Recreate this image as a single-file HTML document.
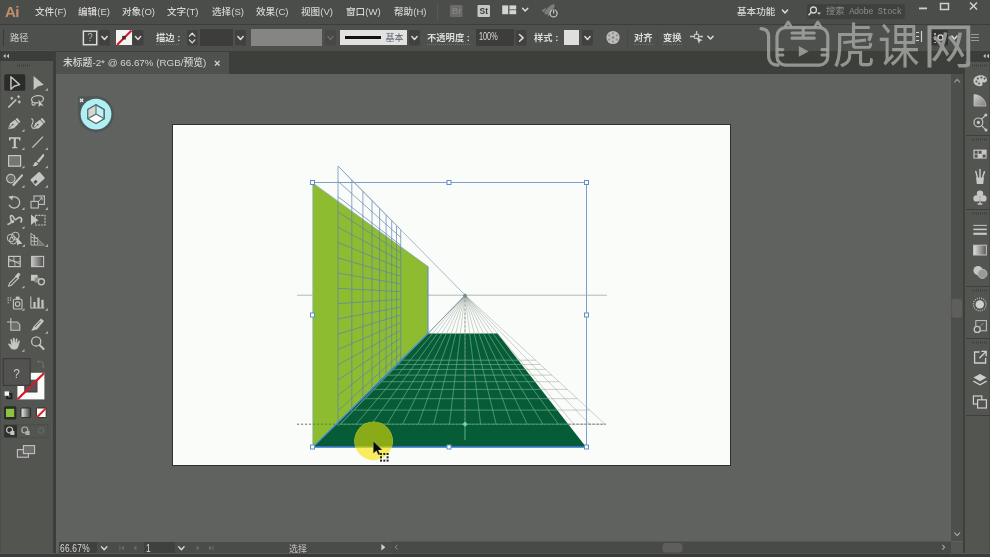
<!DOCTYPE html>
<html lang="zh-CN"><head><meta charset="utf-8"><title>Adobe Illustrator</title>
<style>
*{box-sizing:border-box;margin:0;padding:0}
html,body{width:990px;height:557px;overflow:hidden;background:#5f615e;}
body{position:relative;font-family:"Liberation Sans", "Noto Sans CJK SC", sans-serif;font-size:10px;color:#d6d6d4;line-height:1;-webkit-font-smoothing:antialiased}
.abs{position:absolute}
.t{position:absolute;white-space:nowrap;line-height:12px;height:12px;filter:blur(0.3px)}
#menubar{left:0;top:0;width:990px;height:24px;background:#4b4d4a}
#ctrlbar{left:0;top:25px;width:990px;height:25.5px;background:#4e504d}
#sep1{left:0;top:23.5px;width:990px;height:1.5px;background:#3c3e3b}
#tabstrip{left:53px;top:50.5px;width:913px;height:23px;background:#3d3f3b}
#tab{left:56px;top:51.5px;width:172.5px;height:22px;background:#4f514e}
#canvas{left:56px;top:73.5px;width:895px;height:480px;background:#5f625e}
#toolbar{left:0;top:50px;width:53px;height:507px;background:#535551;border-left:1.5px solid #4a4c49}
#toolhead{left:0;top:51px;width:53px;height:9.6px;background:#3b3d3a}
#toolgap{left:53px;top:50.5px;width:3px;height:507px;background:#3c3e3b}
#vscroll{left:950.7px;top:73.5px;width:12.2px;height:467.5px;background:#4d4f4c}
#rpanel{left:965.2px;top:50.5px;width:24.8px;height:507px;background:#535551;border-right:1.5px solid #484a47}
#rgap{left:962.8px;top:50.5px;width:2.6px;height:507px;background:#3e403d}
#rhead{left:965.2px;top:51px;width:24.8px;height:9.6px;background:#3b3d3a}
#status{left:59px;top:541.5px;width:892px;height:11.8px;background:#4a4c49}
#bottom{left:0;top:553.3px;width:990px;height:4px;background:#3a3c39;border-top:1.3px solid #565854}
.menu{top:6px;font-size:9.6px;color:#d6d6d4;font-weight:500}
.ctl{top:32px;font-size:9.3px;color:#dcdcda;font-weight:700;transform:scaleY(0.94)}
svg{position:absolute;left:0;top:0;overflow:visible;filter:blur(0.35px)}
</style></head>
<body>
<div class="abs" id="canvas"></div>
<div class="abs" id="menubar"></div>
<div class="abs" id="sep1"></div>
<div class="abs" id="ctrlbar"></div>
<div class="abs" id="tabstrip"></div>
<div class="abs" id="tab"></div>
<div class="abs" id="toolbar"></div>
<div class="abs" id="toolhead"></div>
<div class="abs" id="toolgap"></div>
<div class="abs" id="vscroll"></div>
<div class="abs" id="rgap"></div>
<div class="abs" id="rpanel"></div>
<div class="abs" id="rhead"></div>
<div class="abs" id="status"></div>
<div class="abs" id="bottom"></div>
<div class="t" style="left:5px;top:2.5px;font-size:15px;line-height:18px;height:18px;color:#c4906a;font-weight:bold;letter-spacing:-0.5px">Ai</div>
<div class="t menu" style="left:35px">文件(F)</div>
<div class="t menu" style="left:78px">编辑(E)</div>
<div class="t menu" style="left:122px">对象(O)</div>
<div class="t menu" style="left:167px">文字(T)</div>
<div class="t menu" style="left:212px">选择(S)</div>
<div class="t menu" style="left:256px">效果(C)</div>
<div class="t menu" style="left:301px">视图(V)</div>
<div class="t menu" style="left:346px">窗口(W)</div>
<div class="t menu" style="left:394px">帮助(H)</div>
<div class="t menu" style="left:737px">基本功能</div>
<div class="abs" style="left:806.5px;top:4px;width:98.5px;height:14.5px;background:#3f413e;border-radius:2px"></div>
<div class="t" style="left:826px;top:5px;font-size:9.3px;color:#8c8d8b"><span>搜索</span><span style="font-family:'Liberation Mono',monospace;font-size:8.6px;letter-spacing:-0.42px"> Adobe Stock</span></div>
<div class="t ctl" style="left:10px;font-weight:500;color:#bebebc">路径</div>
<div class="t ctl" style="left:156px">描边 :</div>
<div class="t ctl" style="left:427px">不透明度 :</div>
<div class="t ctl" style="left:534px">样式 :</div>
<div class="t ctl" style="left:634px">对齐</div>
<div class="t ctl" style="left:663px">变换</div>
<div class="abs" style="left:200px;top:29px;width:33px;height:17px;background:#3d3e3c"></div>
<div class="abs" style="left:251px;top:29px;width:71px;height:17px;background:#858683"></div>
<div class="abs" style="left:340px;top:30px;width:67px;height:15px;background:#e2e3e1"></div>
<div class="abs" style="left:344.5px;top:36.4px;width:36.5px;height:2.4px;background:#111"></div>
<div class="t" style="left:385.5px;top:32px;font-size:9px;color:#56606c">基本</div>
<div class="abs" style="left:476px;top:29px;width:38px;height:17px;background:#3d3e3c"></div>
<div class="t" style="left:478.6px;top:31.3px;font-size:10.4px;color:#dadad8;transform-origin:0 50%;transform:scaleX(0.7)">100%</div>
<div class="abs" style="left:564px;top:30px;width:15px;height:15px;background:#dfe0de"></div>
<div class="abs" style="left:83px;top:31px;width:14px;height:14px;background:#444643"></div>
<div class="t" style="left:87.2px;top:32.4px;font-size:10px;color:#b0b0ae">?</div>
<div class="abs" style="left:116px;top:30px;width:16px;height:15px;background:#f4f4f2"></div>
<div class="t" style="left:63px;top:57.4px;font-size:9.8px;font-weight:500;color:#d4d4d2">未标题-2* @ 66.67% (RGB/预览)</div>
<div class="t" style="left:214px;top:56.6px;font-size:11px;color:#d8d8d6;font-weight:bold">×</div>
<div class="abs" style="left:59px;top:542.4px;width:37.6px;height:10.6px;background:#3f413e"></div>
<div class="abs" style="left:951px;top:541.5px;width:12px;height:11.8px;background:#555754"></div>
<div class="t" style="left:60.4px;top:543.2px;font-size:10.6px;line-height:10px;height:10px;color:#dcdcda;letter-spacing:0.3px;transform-origin:0 50%;transform:scaleX(0.79)">66.67%</div>
<div class="abs" style="left:143.5px;top:542.4px;width:31px;height:10.6px;background:#3f413e"></div>
<div class="t" style="left:146px;top:543.2px;font-size:10.6px;line-height:10px;height:10px;color:#dcdcda;transform-origin:0 50%;transform:scaleX(0.8)">1</div>
<div class="t" style="left:289px;top:543.6px;font-size:9px;line-height:10px;height:10px;color:#c4c4c2">选择</div>
<svg width="990" height="557" viewBox="0 0 990 557">
<rect x="172.5" y="124.5" width="558" height="341" fill="#fafcf9" stroke="#30312f" stroke-width="1"/>
<line x1="297" y1="295.2" x2="607" y2="295.2" stroke="#b3b9b1" stroke-width="1"/>
<polygon points="312.6,183 428,266.5 428,334 312.6,447" fill="#8dbc31"/>
<polygon points="313,447 428,333.5 497.5,333.5 586,447" fill="#055c37"/>
<path d="M338.0 166.0L338.0 426.0M351.8 180.0L351.8 411.8M362.9 191.3L362.9 400.3M372.0 200.5L372.0 390.9M379.6 208.3L379.6 383.1M386.1 214.9L386.1 376.4M391.7 220.5L391.7 370.7M396.5 225.4L396.5 365.7M400.7 229.7L400.7 361.3M338 166.0L400.7 229.7M338 181.3L400.7 237.4M338 196.6L400.7 245.2M338 211.9L400.7 252.9M338 227.2L400.7 260.7M338 242.5L400.7 268.4M338 257.8L400.7 276.2M338 273.1L400.7 283.9M338 288.4L400.7 291.6M338 303.6L400.7 299.4M338 318.9L400.7 307.1M338 334.2L400.7 314.9M338 349.5L400.7 322.6M338 364.8L400.7 330.3M338 380.1L400.7 338.1M338 395.4L400.7 345.8M338 410.7L400.7 353.6M338 426.0L400.7 361.3" fill="none" stroke="#5b7fb0" stroke-opacity="0.75" stroke-width="0.9"/>
<line x1="338" y1="166" x2="465" y2="295" stroke="#98a6c0" stroke-width="0.8"/>
<path d="M465.0 295.0L340.5 424.2M465.0 295.0L356.1 424.2M465.0 295.0L371.6 424.2M465.0 295.0L387.2 424.2M465.0 295.0L402.8 424.2M465.0 295.0L418.3 424.2M465.0 295.0L433.9 424.2M465.0 295.0L449.4 424.2M465.0 295.0L465.0 424.2M465.0 295.0L480.6 424.2M465.0 295.0L496.1 424.2M465.0 295.0L511.7 424.2M465.0 295.0L527.2 424.2M465.0 295.0L542.8 424.2M465.0 295.0L558.4 424.2M465.0 295.0L573.9 424.2M465.0 295.0L589.5 424.2M465.0 295.0L605.0 424.2M340.5 424.2L605.0 424.2M354.1 410.1L589.7 410.1M365.1 398.7L577.4 398.7M374.0 389.4L567.4 389.4M381.5 381.7L558.9 381.7M387.9 375.1L551.8 375.1M393.3 369.4L545.6 369.4M398.0 364.5L540.3 364.5M402.2 360.2L535.7 360.2" fill="none" stroke="#8a938a" stroke-opacity="0.6" stroke-width="0.7"/>
<clipPath id="fl"><polygon points="313,447 428,333.5 497.5,333.5 586,447"/></clipPath>
<g clip-path="url(#fl)"><path d="M465.0 295.0L340.5 424.2M465.0 295.0L356.1 424.2M465.0 295.0L371.6 424.2M465.0 295.0L387.2 424.2M465.0 295.0L402.8 424.2M465.0 295.0L418.3 424.2M465.0 295.0L433.9 424.2M465.0 295.0L449.4 424.2M465.0 295.0L465.0 424.2M465.0 295.0L480.6 424.2M465.0 295.0L496.1 424.2M465.0 295.0L511.7 424.2M465.0 295.0L527.2 424.2M465.0 295.0L542.8 424.2M465.0 295.0L558.4 424.2M465.0 295.0L573.9 424.2M465.0 295.0L589.5 424.2M465.0 295.0L605.0 424.2M340.5 424.2L605.0 424.2M354.1 410.1L589.7 410.1M365.1 398.7L577.4 398.7M374.0 389.4L567.4 389.4M381.5 381.7L558.9 381.7M387.9 375.1L551.8 375.1M393.3 369.4L545.6 369.4M398.0 364.5L540.3 364.5M402.2 360.2L535.7 360.2" fill="none" stroke="#58b885" stroke-opacity="0.55" stroke-width="0.8"/></g>
<path d="M297 424.2H313M568.500 424.200H606" stroke="#6e766c" stroke-width="1" stroke-dasharray="2.2 1.8" fill="none"/>
<path d="M313 424.2H336" stroke="#5c8c22" stroke-width="1" stroke-dasharray="2.2 1.8" fill="none"/>
<path d="M336 424.2H568.500" stroke="#5fb88a" stroke-opacity="0.5" stroke-width="0.9" stroke-dasharray="2.2 1.8" fill="none"/>
<line x1="465" y1="296" x2="465" y2="424" stroke="#6f8f78" stroke-width="0.9" stroke-dasharray="2 2.2" stroke-opacity="0.8"/>
<line x1="465" y1="424" x2="465" y2="440" stroke="#5fc08c" stroke-width="0.9"/>
<polygon points="465,421.6 467.6,424.2 465,426.8 462.4,424.2" fill="#7fd0a0"/>
<polygon points="465,293.2 467.2,295.4 465,297.6 462.8,295.4" fill="#6f8f7c"/>
<line x1="428" y1="333.5" x2="464.5" y2="296" stroke="#7f98b4" stroke-width="1"/>
<path d="M313 447L428 333.5" fill="none" stroke="#4a8cd4" stroke-width="1.2"/>
<path d="M428 266.5V333.5" fill="none" stroke="#6c93c8" stroke-width="1.2"/>
<path d="M313 183L428 266.5" fill="none" stroke="#6c93c8" stroke-width="0.8" stroke-opacity="0.7"/>
<path d="M312.5 182.5H586.5V447" fill="none" stroke="#7f9ecb" stroke-width="1"/><path d="M312.5 182.5V447" fill="none" stroke="#9fc0e6" stroke-opacity="0.6" stroke-width="1"/>
<line x1="313" y1="446.9" x2="586" y2="446.9" stroke="#3272bc" stroke-width="1.6"/>
<rect x="310.5" y="180.5" width="4" height="4" fill="#fafcf9" stroke="#5f90cc" stroke-width="1"/>
<rect x="447.0" y="180.5" width="4" height="4" fill="#fafcf9" stroke="#5f90cc" stroke-width="1"/>
<rect x="584.5" y="180.5" width="4" height="4" fill="#fafcf9" stroke="#5f90cc" stroke-width="1"/>
<rect x="310.5" y="313.0" width="4" height="4" fill="#fafcf9" stroke="#5f90cc" stroke-width="1"/>
<rect x="584.5" y="313.0" width="4" height="4" fill="#fafcf9" stroke="#5f90cc" stroke-width="1"/>
<rect x="310.5" y="445.0" width="4" height="4" fill="#fafcf9" stroke="#5f90cc" stroke-width="1"/>
<rect x="447.0" y="445.0" width="4" height="4" fill="#fafcf9" stroke="#5f90cc" stroke-width="1"/>
<rect x="584.5" y="445.0" width="4" height="4" fill="#fafcf9" stroke="#5f90cc" stroke-width="1"/>
<circle cx="373.6" cy="441" r="19.2" fill="#f6ec5e"/>
<g clip-path="url(#fl)"><circle cx="373.6" cy="441" r="19.2" fill="#8aab18"/></g>
<clipPath id="cc"><circle cx="373.6" cy="441" r="19.2"/></clipPath>
<g clip-path="url(#cc)"><line x1="350" y1="447.2" x2="400" y2="447.2" stroke="#c0cc3c" stroke-width="1.6"/></g>
<path d="M373.3 441.200V453.600L376.400 450.800L378.400 455L380.200 454.200L378.300 450.100H382.400Z" fill="#0a0a0a" stroke="#e8e8d0" stroke-opacity="0.5" stroke-width="0.5"/>
<g fill="#222"><rect x="380" y="453" width="2" height="2"/><rect x="383.3" y="453" width="2" height="2"/><rect x="386.6" y="453" width="2" height="2"/><rect x="380" y="456.3" width="2" height="2"/><rect x="386.6" y="456.3" width="2" height="2"/><rect x="380" y="459.6" width="2" height="2"/><rect x="383.3" y="459.6" width="2" height="2"/><rect x="386.6" y="459.6" width="2" height="2"/></g>
<path d="M79.6 96.2H96A18 18 0 1 1 78 114.2V97.8A1.6 1.6 0 0 1 79.6 96.2Z" fill="#4d5856"/>
<circle cx="96" cy="114.1" r="15.4" fill="#b2eef5"/>
<polygon points="96,104.7 104.2,109.4 104.2,118.8 96,123.5 87.8,118.8 87.8,109.4" fill="#c4f0f4" stroke="#50706e" stroke-width="1.2" stroke-linejoin="round"/>
<polygon points="96,104.7 96,114.1 87.8,118.8 87.8,109.4" fill="#d6d6d2"/>
<polygon points="96,114.1 104.2,118.8 96,123.5 87.8,118.8" fill="#fbfbf9"/>
<path d="M96 104.7V114.1L87.8 118.8M96 114.1L104.2 118.8" fill="none" stroke="#50706e" stroke-width="1.1"/>
<polygon points="96,104.7 104.2,109.4 104.2,118.8 96,123.5 87.8,118.8 87.8,109.4" fill="none" stroke="#50706e" stroke-width="1.2" stroke-linejoin="round"/>
<path d="M80 98.8l3.200 3.200m0-3.200l-3.200 3.200" stroke="#e4e4e2" stroke-width="1.300" fill="none"/>
</svg>
<svg width="990" height="557" viewBox="0 0 990 557">
<line x1="437.5" y1="4" x2="437.5" y2="20" stroke="#575a56" stroke-width="1"/>
<rect x="450.0" y="5.0" width="12.5" height="12.0" fill="#6b6c6a" rx="1.0" />
<rect x="477.5" y="5.0" width="12.5" height="12.0" fill="#c6c6c4" rx="1.0" />
<rect x="502.2" y="5.4" width="6.0" height="8.8" fill="#d4d4d2" rx="0.0" />
<rect x="509.4" y="5.4" width="6.8" height="4.0" fill="#d4d4d2" rx="0.0" />
<rect x="509.4" y="10.2" width="6.8" height="4.0" fill="#d4d4d2" rx="0.0" />
<path d="M522.6 8.2L525.2 11.0L527.8 8.2" fill="none" stroke="#dcdcda" stroke-width="1.5" stroke-linecap="round" stroke-linejoin="round"/>
<g fill="#7c7e7b"><ellipse cx="549.6" cy="9.4" rx="6.8" ry="2.5" transform="rotate(-45 549.6 9.4)"/><path d="M541.4 10.2l5-2.400l-2.400 4.800ZM547.400 16.800l1.400-5.200l3.600 1.600Z"/></g>
<circle cx="553.6" cy="13.4" r="3.5" fill="#4b4d4a" stroke="#c4c4c2" stroke-width="1.300"/><line x1="553.6" y1="9.600" x2="553.6" y2="13.400" stroke="#4b4d4a" stroke-width="3"/><line x1="553.6" y1="10" x2="553.6" y2="13.400" stroke="#c4c4c2" stroke-width="1.200"/>
<path d="M782.4 10.1L785.0 12.9L787.6 10.1" fill="none" stroke="#dcdcda" stroke-width="1.5" stroke-linecap="round" stroke-linejoin="round"/>
<circle cx="813.5" cy="10" r="3" fill="none" stroke="#d0d0ce" stroke-width="1.3"/><line x1="811.3" y1="12.3" x2="808.5" y2="15.2" stroke="#d0d0ce" stroke-width="1.6"/><polygon points="817,12.5 821,12.5 819,14.8" fill="#d0d0ce"/>
<rect x="919.0" y="7.5" width="8.0" height="1.8" fill="#d0d0ce" rx="0.0" />
<rect x="940.5" y="3.5" width="8" height="6" fill="none" stroke="#d0d0ce" stroke-width="1.5"/>
<path d="M970 2.5l7 7m0-7l-7 7" stroke="#d0d0ce" stroke-width="1.5" fill="none"/>
<line x1="3.5" y1="29" x2="3.5" y2="46" stroke="#3a3b39" stroke-width="1"/>
<rect x="99.0" y="30.0" width="11.0" height="15.5" fill="#414240" rx="1.5" />
<path d="M101.9 36.6L104.5 39.4L107.1 36.6" fill="none" stroke="#dcdcda" stroke-width="1.5" stroke-linecap="round" stroke-linejoin="round"/>
<rect x="132.5" y="30.0" width="11.0" height="15.5" fill="#414240" rx="1.5" />
<path d="M135.4 36.6L138.0 39.4L140.6 36.6" fill="none" stroke="#dcdcda" stroke-width="1.5" stroke-linecap="round" stroke-linejoin="round"/>
<rect x="235.0" y="30.0" width="11.0" height="15.5" fill="#414240" rx="1.5" />
<path d="M237.9 36.6L240.5 39.4L243.1 36.6" fill="none" stroke="#dcdcda" stroke-width="1.5" stroke-linecap="round" stroke-linejoin="round"/>
<rect x="409.0" y="30.0" width="11.0" height="15.5" fill="#414240" rx="1.5" />
<path d="M411.9 36.6L414.5 39.4L417.1 36.6" fill="none" stroke="#dcdcda" stroke-width="1.5" stroke-linecap="round" stroke-linejoin="round"/>
<rect x="582.0" y="30.0" width="11.0" height="15.5" fill="#414240" rx="1.5" />
<path d="M584.9 36.6L587.5 39.4L590.1 36.6" fill="none" stroke="#dcdcda" stroke-width="1.5" stroke-linecap="round" stroke-linejoin="round"/>
<rect x="325.0" y="30.0" width="11.0" height="15.5" fill="#484947" rx="1.5" />
<path d="M327.9 36.6L330.5 39.4L333.1 36.6" fill="none" stroke="#6a6b69" stroke-width="1.5" stroke-linecap="round" stroke-linejoin="round"/>
<line x1="117" y1="45" x2="131.5" y2="30.5" stroke="#d41c2c" stroke-width="2.1"/>
<rect x="122.2" y="35.9" width="3.6" height="3.6" fill="#4a2a26" rx="0.0" />
<rect x="83.400" y="31.200" width="13.300" height="13.500" fill="none" stroke="#dcdcda" stroke-width="1.500"/>
<rect x="187.0" y="30.0" width="10.5" height="15.5" fill="#414240" rx="1.5" />
<path d="M189.4 36.1L192.2 33.1L194.9 36.1" fill="none" stroke="#dcdcda" stroke-width="1.3" stroke-linecap="round" stroke-linejoin="round"/>
<path d="M189.4 39.9L192.2 42.9L194.9 39.9" fill="none" stroke="#dcdcda" stroke-width="1.3" stroke-linecap="round" stroke-linejoin="round"/>
<rect x="515.5" y="30.0" width="11.0" height="15.5" fill="#414240" rx="1.5" />
<path d="M519.5 34.5l3.6 3.4l-3.6 3.4" fill="none" stroke="#dededc" stroke-width="1.5" stroke-linecap="round" stroke-linejoin="round"/>
<circle cx="613" cy="37.5" r="6.6" fill="#bdbdbb"/>
<g fill="#8e8f8d"><circle cx="613" cy="37.5" r="1.5"/><circle cx="613" cy="33.3" r="1.1"/><circle cx="613" cy="41.7" r="1.1"/><circle cx="609.2" cy="35.4" r="1.1"/><circle cx="616.8" cy="35.4" r="1.1"/><circle cx="609.2" cy="39.6" r="1.1"/><circle cx="616.8" cy="39.6" r="1.1"/></g>
<line x1="627.5" y1="29" x2="627.5" y2="46" stroke="#464845" stroke-width="1"/><line x1="657.5" y1="29" x2="657.5" y2="46" stroke="#484a47" stroke-width="1"/>
<line x1="156" y1="44.5" x2="180" y2="44.5" stroke="#8c8d8b" stroke-opacity="0.7" stroke-width="0.8" stroke-dasharray="1 1"/>
<line x1="427" y1="44.5" x2="470" y2="44.5" stroke="#8c8d8b" stroke-opacity="0.7" stroke-width="0.8" stroke-dasharray="1 1"/>
<line x1="634" y1="44.5" x2="653" y2="44.5" stroke="#8c8d8b" stroke-opacity="0.7" stroke-width="0.8" stroke-dasharray="1 1"/>
<line x1="663" y1="44.5" x2="682" y2="44.5" stroke="#8c8d8b" stroke-opacity="0.7" stroke-width="0.8" stroke-dasharray="1 1"/>
<path d="M690 36.5h4.6M696.6 31v4M698.6 36.5h4.400M696.6 38v1" fill="none" stroke="#c8c8c6" stroke-width="1.400"/><rect x="694.6" y="34.4" width="4" height="4" fill="none" stroke="#c8c8c6" stroke-width="1"/><path d="M696.400 37.200l6.400 3l-2.800 .8l-1 2.800Z" fill="#d0d0ce"/>
<path d="M707.9 36.2L710.5 39.0L713.1 36.2" fill="none" stroke="#dcdcda" stroke-width="1.5" stroke-linecap="round" stroke-linejoin="round"/>
<path d="M916 32.5h3M916 36.5h3M916 40.5h3M921.5 31v11" stroke="#cfcfcd" stroke-width="1.2" fill="none"/>
<rect x="931.0" y="30.0" width="17.0" height="15.5" fill="#333432" rx="1.5" />
<circle cx="940.5" cy="37.5" r="2.6" fill="none" stroke="#d8d8d6" stroke-width="1.3"/><path d="M935 33v2M935 38v2M935 42v1" stroke="#d8d8d6" stroke-width="1.4"/>
<path d="M951.9 36.1L954.5 38.9L957.1 36.1" fill="none" stroke="#dcdcda" stroke-width="1.5" stroke-linecap="round" stroke-linejoin="round"/>
<path d="M971 34.5h8M971 37.5h8M971 40.5h8" stroke="#9a9b99" stroke-width="1.2" fill="none"/>
<path d="M5.6 53.8L3.2 56L5.6 58.2ZM9 53.8L6.6 56L9 58.2Z" fill="#c4c4c2"/>
<line x1="17" y1="65.5" x2="31" y2="65.5" stroke="#3f403e" stroke-width="2" stroke-dasharray="1 1"/>
<rect x="4.3" y="74.3" width="21.0" height="16.5" fill="#2b2c2a" rx="1.5" />
<path d="M10.9 76.800V89.200L14.200 86.200L19.600 84.600Z" fill="none" stroke="#c2c2c0" stroke-width="1.500" stroke-linejoin="round"/>
<path d="M33.600 76V90L37.800 86.400L43.800 84.800Z" fill="#c6c6c4"/>
<polygon points="47.9,87.9 47.9,90.7 45.1,90.7" fill="#b4b4b2"/>
<path d="M8.8 107L15.8 100" stroke="#c6c6c4" stroke-width="1.7" fill="none" stroke-linecap="round"/>
<path d="M11.8 96.8v3M10.3 98.3h3M18.6 95.2v3M17.1 96.7h3M19.3 100.4v3M17.8 101.9h3" stroke="#c6c6c4" stroke-width="1.1" fill="none"/>
<ellipse cx="37.5" cy="99.2" rx="6" ry="3.6" fill="none" stroke="#c2c2c0" stroke-width="1.3" transform="rotate(-8 37.5 99.2)"/>
<path d="M33 101.5c-2 1.5-1 4 1.2 3.6c1.2-.3 1-1.8 0-1.6" fill="none" stroke="#c2c2c0" stroke-width="1.1"/>
<path d="M38.4 99v8.4l2.2-1.8l3.4 .6Z" fill="#c8c8c6" stroke="#525351" stroke-width="0.5"/>
<g transform="translate(8.0 129.2) scale(0.86) translate(-8 -129.2)">
<path d="M8 129.2L10.6 122.3L16.2 118.2L20.2 122.8L14.8 128.2Z" fill="#c6c6c4"/>
<path d="M16.8 117.6L18.6 116L22.4 120.6L20.8 122.2Z" fill="#c6c6c4"/>
<path d="M8.6 128.6L13 124.4" stroke="#535551" stroke-width="0.9"/><circle cx="13.6" cy="123.8" r="1" fill="#535551"/>
</g>
<polygon points="24.5,128.9 24.5,131.7 21.7,131.7" fill="#b4b4b2"/>
<g transform="translate(33.0 129.2) scale(0.86) translate(-8 -129.2)">
<path d="M8 129.2L10.6 122.3L16.2 118.2L20.2 122.8L14.8 128.2Z" fill="#c6c6c4"/>
<path d="M16.8 117.6L18.6 116L22.4 120.6L20.8 122.2Z" fill="#c6c6c4"/>
<path d="M8.6 128.6L13 124.4" stroke="#535551" stroke-width="0.9"/><circle cx="13.6" cy="123.8" r="1" fill="#535551"/>
</g>
<path d="M31.2 118.6c2.4 .4 2.2 3 1.2 4.8c-1.2 2.2-1 4.6 1.4 5.2" fill="none" stroke="#c2c2c0" stroke-width="1.1"/>
<path d="M9 137.2h11.4v3.2h-1.2l-.5-1.7h-2.9v8.2l1.7 .4v1H12l0-1l1.7-.4v-8.2h-2.9l-.5 1.7H9Z" fill="#cacac8"/>
<polygon points="24.5,147.3 24.5,150.1 21.7,150.1" fill="#b4b4b2"/>
<path d="M32.4 147.6L43 136.6" stroke="#c6c6c4" stroke-width="1.3" fill="none"/>
<polygon points="47.9,147.3 47.9,150.1 45.1,150.1" fill="#b4b4b2"/>
<rect x="8.6" y="155.6" width="12" height="10.6" fill="#757674" stroke="#c6c6c4" stroke-width="1.2"/>
<polygon points="24.5,165.5 24.5,168.3 21.7,168.3" fill="#b4b4b2"/>
<path d="M43.8 154.2c.8 .6 .4 1.8-.4 2.8l-4.6 5.8l-2-1.6l5-5.8c.8-1 1.4-1.6 2-1.200Z" fill="#c6c6c4"/>
<path d="M36.2 162l2 1.700c-.6 1.8-3 2.9-6 2.400c1.5-.8 1.8-2 2.1-2.800c.4-1 1.1-1.4 1.9-1.300Z" fill="#c6c6c4"/>
<polygon points="47.9,165.5 47.9,168.3 45.1,168.3" fill="#b4b4b2"/>
<circle cx="10.8" cy="178.6" r="4.2" fill="#6a6b69" stroke="#c2c2c0" stroke-width="1.2"/>
<path d="M13.4 185L22 175.4" stroke="#c6c6c4" stroke-width="2.1" fill="none" stroke-linecap="round"/>
<polygon points="24.5,184.9 24.5,187.7 21.7,187.7" fill="#b4b4b2"/>
<g transform="rotate(-42 37.6 179)"><rect x="31.4" y="174.6" width="12.4" height="8.8" rx="1" fill="#c6c6c4"/><rect x="32.4" y="178.4" width="3.4" height="2.6" fill="#4a4b49"/></g>
<polygon points="47.9,184.9 47.9,187.7 45.1,187.7" fill="#b4b4b2"/>
<path d="M11.6 197.4a5.6 5.6 0 1 1-2.6 7.4" fill="none" stroke="#c2c2c0" stroke-width="1.3"/><path d="M8.2 196.800l4.8-1.200l-.8 4.600Z" fill="#c2c2c0"/>
<polygon points="24.5,207.1 24.5,209.9 21.7,209.9" fill="#b4b4b2"/>
<rect x="34" y="196" width="10.4" height="8.4" fill="none" stroke="#c2c2c0" stroke-width="1.1"/><rect x="31" y="201.4" width="7.4" height="6.6" fill="#525351" stroke="#c2c2c0" stroke-width="1.1"/><path d="M38.6 201.200l3.6-3.400m-2.6 0h2.600v2.6" stroke="#c2c2c0" stroke-width="0.9" fill="none"/>
<polygon points="47.9,207.1 47.9,209.9 45.1,209.9" fill="#b4b4b2"/>
<path d="M8 224.200c2.4-.2 3.4-1.6 3.2-3.600c-.2-2.2-1.4-3.4-.6-4.600c1-1.2 2.8 .2 3.4 2.200c.4 1.4 1.4 1.8 2.4 1c1.4-1.2 2.6-2.6 4.2-1.600c1.4 1 1.2 3 .4 4.4" fill="none" stroke="#c6c6c4" stroke-width="1.6" stroke-linecap="round"/><circle cx="12.6" cy="221.6" r="1.6" fill="#c6c6c4"/>
<polygon points="24.5,225.9 24.5,228.7 21.7,228.7" fill="#b4b4b2"/>
<rect x="35.4" y="215.4" width="9.6" height="9.6" fill="none" stroke="#c2c2c0" stroke-width="1.1" stroke-dasharray="2 1"/><path d="M31 214.400v10.600l3-2.400l4.6-2Z" fill="#c6c6c4"/>
<circle cx="11" cy="238" r="3.8" fill="none" stroke="#c2c2c0" stroke-width="1"/><circle cx="15.4" cy="236" r="3.8" fill="none" stroke="#c2c2c0" stroke-width="1"/><circle cx="13.2" cy="240.4" r="3.6" fill="none" stroke="#c2c2c0" stroke-width="1"/><path d="M17 237.600v8l2-1.600l3.4-.2Z" fill="#c8c8c6"/>
<polygon points="24.9,244.1 24.9,246.9 22.1,246.9" fill="#b4b4b2"/>
<path d="M31 233.200V245L44.2 245ZM31 237.200L36.4 238.400M31 241L40 241.800M34.4 234.800V245M37.6 237.400V245" fill="none" stroke="#c2c2c0" stroke-width="0.9"/><path d="M37.6 239L44.2 245H37.6Z" fill="#747673"/>
<polygon points="47.9,244.1 47.9,246.9 45.1,246.9" fill="#b4b4b2"/>
<rect x="8.6" y="256.4" width="11.6" height="10.2" fill="none" stroke="#c6c6c4" stroke-width="1.2"/><path d="M8.6 261.400c4-2 7.6 2 11.6 0M14.4 256.400c-2 3.6 2 6.6 0 10.200M8.6 258.800l11.6 5.4" fill="none" stroke="#c6c6c4" stroke-width="0.9"/>
<linearGradient id="gr1" x1="0" x2="1" y1="0" y2="0"><stop offset="0" stop-color="#c6c6c4"/><stop offset="1" stop-color="#4a4b49"/></linearGradient>
<rect x="31.6" y="256.4" width="12" height="10.2" fill="url(#gr1)" stroke="#c6c6c4" stroke-width="1.1"/>
<path d="M8.6 286.200l1-2.800l7-7.400l2 2l-7.2 7.200Z" fill="none" stroke="#c2c2c0" stroke-width="1.1"/><path d="M15.6 276.200l2.2-2.600c1-1 2.6 .6 1.8 1.600l-2.2 2.800Z" fill="#c6c6c4" stroke="#c6c6c4" stroke-width="1"/>
<polygon points="24.5,285.5 24.5,288.3 21.7,288.3" fill="#b4b4b2"/>
<rect x="31" y="274.8" width="6.6" height="6" fill="#c6c6c4"/><rect x="34.6" y="277.6" width="5" height="5" fill="#8e8f8d"/><circle cx="41.4" cy="281.8" r="3" fill="#525351" stroke="#c2c2c0" stroke-width="1.4"/>
<rect x="13.4" y="299.2" width="8.6" height="9.8" rx="1" fill="none" stroke="#c2c2c0" stroke-width="1.1"/><rect x="15.8" y="296.6" width="3.8" height="2.6" fill="#c2c2c0"/><circle cx="17.6" cy="304" r="2.3" fill="none" stroke="#c2c2c0" stroke-width="1.1"/><path d="M7.6 297.800h1.200M10 297.800h1.200M7.6 300.200h1.200M10 300.200h1.200M7.6 302.600h1.2" stroke="#c2c2c0" stroke-width="1.2"/>
<polygon points="24.5,307.9 24.5,310.7 21.7,310.7" fill="#b4b4b2"/>
<path d="M30.8 296.400V308h13.6" fill="none" stroke="#c2c2c0" stroke-width="1.1"/><rect x="33.4" y="302" width="2.2" height="6" fill="#c6c6c4"/><rect x="37.4" y="297.6" width="2.2" height="10.4" fill="#c6c6c4"/><rect x="41.4" y="299.8" width="2.2" height="8.2" fill="#c6c6c4"/>
<polygon points="47.9,307.9 47.9,310.7 45.1,310.7" fill="#b4b4b2"/>
<path d="M10.8 318v3.600M7 322h4" stroke="#c2c2c0" stroke-width="1.1" fill="none"/><path d="M10.8 322h6.600l2.4 2.600v5.600h-9Z" fill="#6e6f6d" stroke="#c2c2c0" stroke-width="1.1"/>
<path d="M31.2 331l2.4-4.400l7.4-8l3 2.400l-6.8 8.200Z" fill="#c6c6c4"/><path d="M35 327l5.6-6" stroke="#525351" stroke-width="0.9"/>
<polygon points="47.9,330.9 47.9,333.7 45.1,333.7" fill="#b4b4b2"/>
<path d="M11 348.400c-1.2-1.6-2.2-3.4-3-4.400c.6-1 1.8-.6 2.8 .6l.6 .6l-1-5.400c0-1 1.4-1.2 1.7-.2l1 3.800l-.1-5c.1-1 1.5-1 1.7 0l.5 4.800l.7-4.200c.3-1 1.5-.8 1.5 .2l-.2 4.600l1.2-2.800c.5-.9 1.6-.4 1.4 .6c-.6 2.2-1 4-1.6 5.400c-.6 1.6-1.4 2.2-3.4 2.400c-1.8 .2-3-.2-3.8-1Z" fill="#c6c6c4"/>
<polygon points="24.5,348.9 24.5,351.7 21.7,351.7" fill="#b4b4b2"/>
<circle cx="36.2" cy="341.4" r="4.6" fill="none" stroke="#c2c2c0" stroke-width="1.3"/><path d="M39.6 345l4 4" stroke="#c6c6c4" stroke-width="2" stroke-linecap="round"/>
<rect x="17.4" y="372.8" width="27" height="26.6" fill="#fbfbf9"/>
<rect x="24.8" y="380.2" width="12.2" height="11.8" fill="#525351" stroke="#3e3f3d" stroke-width="1"/>
<line x1="17.6" y1="399.2" x2="44.2" y2="373" stroke="#d41c2c" stroke-width="2.3"/>
<rect x="3.2" y="358.6" width="27" height="26.8" fill="#525351" stroke="#3c3d3b" stroke-width="1.2"/>
<text x="16.6" y="378" font-family="Liberation Sans, sans-serif" font-size="12" fill="#c8c8c6" text-anchor="middle">?</text>
<path d="M38.6 361.600h2.200a2.4 2.4 0 0 1 2.4 2.400v2.4" fill="none" stroke="#747573" stroke-width="1"/><path d="M38.8 360l-1.8 1.600l1.8 1.600ZM41.6 366.200l1.6 1.800l1.6-1.800Z" fill="#747573"/>
<rect x="7.2" y="394" width="4.4" height="4.4" fill="none" stroke="#1c1c1c" stroke-width="1.6"/><rect x="4.6" y="391.4" width="4.4" height="4.4" fill="#f4f4f2"/>
<rect x="4.0" y="406.2" width="12.4" height="13.4" fill="#2a2b29" rx="1.5" />
<rect x="6.0" y="408.8" width="8.2" height="8.2" fill="#8bc53f" rx="0.0" />
<linearGradient id="gr2" x1="0" x2="1" y1="0" y2="0"><stop offset="0" stop-color="#f0f0ee"/><stop offset="1" stop-color="#3a3a3a"/></linearGradient>
<rect x="21" y="408" width="9.6" height="9.6" rx="1" fill="url(#gr2)" stroke="#2e2f2d" stroke-width="1"/>
<rect x="36.4" y="408" width="9.8" height="9.6" rx="1" fill="#fbfbf9" stroke="#2e2f2d" stroke-width="1"/><line x1="37" y1="417.2" x2="45.8" y2="408.4" stroke="#d8232a" stroke-width="2"/>
<rect x="4.0" y="424.8" width="13.0" height="13.0" fill="#2f302e" rx="1.0" />
<circle cx="9.6" cy="430" r="3" fill="none" stroke="#c6c6c4" stroke-width="1.2"/><rect x="10.4" y="431" width="4" height="4" fill="#c6c6c4"/>
<circle cx="24.8" cy="430" r="3" fill="none" stroke="#b0b0ae" stroke-width="1.2"/><rect x="25.6" y="431" width="4" height="4" fill="#b0b0ae"/>
<circle cx="41" cy="430.6" r="2.8" fill="none" stroke="#6c6d6b" stroke-width="1"/>
<rect x="4" y="424.8" width="44" height="13" fill="none" stroke="#4a4b49" stroke-width="0.8"/>
<rect x="17.4" y="449.6" width="11" height="7.6" fill="#5c5d5b" stroke="#c2c2c0" stroke-width="1.1"/><rect x="23.4" y="445.6" width="11.2" height="8" fill="#6e6f6d" stroke="#c2c2c0" stroke-width="1.1"/>
<path d="M985.6 53.8L983.2 56L985.6 58.2ZM989 53.8L986.6 56L989 58.2Z" fill="#c4c4c2"/>
<line x1="966" y1="61.5" x2="990" y2="61.5" stroke="#3f403e" stroke-width="1"/>
<line x1="972" y1="65.5" x2="987" y2="65.5" stroke="#3f403e" stroke-width="2" stroke-dasharray="1 1"/>
<line x1="966" y1="135.5" x2="990" y2="135.5" stroke="#3f403e" stroke-width="1"/>
<line x1="972" y1="139.5" x2="987" y2="139.5" stroke="#3f403e" stroke-width="2" stroke-dasharray="1 1"/>
<line x1="966" y1="209.5" x2="990" y2="209.5" stroke="#3f403e" stroke-width="1"/>
<line x1="972" y1="213.5" x2="987" y2="213.5" stroke="#3f403e" stroke-width="2" stroke-dasharray="1 1"/>
<line x1="966" y1="286.5" x2="990" y2="286.5" stroke="#3f403e" stroke-width="1"/>
<line x1="972" y1="290.5" x2="987" y2="290.5" stroke="#3f403e" stroke-width="2" stroke-dasharray="1 1"/>
<line x1="966" y1="338.5" x2="990" y2="338.5" stroke="#3f403e" stroke-width="1"/>
<line x1="972" y1="342.5" x2="987" y2="342.5" stroke="#3f403e" stroke-width="2" stroke-dasharray="1 1"/>
<line x1="966" y1="415.5" x2="990" y2="415.5" stroke="#3f403e" stroke-width="1"/>
<path d="M973.4 81c0-3.4 3.2-5.8 7.2-5.800c3.6 0 6.4 1.8 6.4 4.600c0 2-1.4 2.8-3 2.600c-1.4-.2-2 .6-1.6 1.600c.4 1.2-.4 2.2-2.4 2.200c-3.8 0-6.6-2.2-6.6-5.200Z" fill="#c6c6c4"/><g fill="#525351"><circle cx="976.4" cy="81.4" r="1"/><circle cx="979" cy="83.4" r="1"/><circle cx="977.8" cy="78.4" r="1"/><circle cx="981.4" cy="77.4" r="1"/><circle cx="984.6" cy="78.6" r="1"/></g>
<linearGradient id="gr3" x1="0" x2="1" y1="0" y2="1"><stop offset="0" stop-color="#d0d0ce"/><stop offset="1" stop-color="#7a7b79"/></linearGradient>
<path d="M974 94.600c6.4 .2 11.4 4.8 12 11.400H974Z" fill="url(#gr3)" stroke="#c2c2c0" stroke-width="0.8"/>
<circle cx="978.4" cy="122.4" r="4.4" fill="none" stroke="#c2c2c0" stroke-width="1.2"/><circle cx="978.4" cy="122.4" r="1.6" fill="#c6c6c4"/><path d="M981.4 119.400l4-4M981.4 125.400l4.2 4.2" stroke="#c2c2c0" stroke-width="1.2"/><circle cx="985.8" cy="115" r="1.5" fill="#c6c6c4"/><circle cx="986" cy="130" r="1.5" fill="#c6c6c4"/>
<rect x="973.4" y="149.6" width="13.2" height="9" fill="#c6c6c4"/><g fill="#525351"><rect x="974.6" y="150.8" width="3" height="3"/><rect x="978.6" y="150.8" width="3" height="3"/><rect x="982.6" y="154.6" width="3" height="3"/><rect x="974.6" y="154.6" width="3" height="3"/></g>
<path d="M976 177.600h8l-.8 6.400h-6.400Z" fill="#c6c6c4"/><path d="M977.4 177.400l-1.6-6M980 177.400v-8M982.6 177.400l1.8-5.6" stroke="#c6c6c4" stroke-width="1.5" stroke-linecap="round"/>
<circle cx="980" cy="193.6" r="3.2" fill="#c6c6c4"/><circle cx="976.6" cy="198.4" r="3.2" fill="#c6c6c4"/><circle cx="983.4" cy="198.4" r="3.2" fill="#c6c6c4"/><path d="M980 197v6.600M977.6 204h4.8" stroke="#c6c6c4" stroke-width="1.3"/>
<path d="M973.4 225.400h13.4" stroke="#c6c6c4" stroke-width="1"/><path d="M973.4 229.400h13.4" stroke="#c6c6c4" stroke-width="1.6"/><path d="M973.4 233.800h13.4" stroke="#c6c6c4" stroke-width="2.2"/>
<linearGradient id="gr4" x1="0" x2="1" y1="0" y2="0"><stop offset="0" stop-color="#e0e0de"/><stop offset="1" stop-color="#5a5b59"/></linearGradient>
<rect x="973.6" y="245.2" width="12.8" height="9.8" fill="url(#gr4)" stroke="#c2c2c0" stroke-width="1"/>
<circle cx="978" cy="270.6" r="4.6" fill="#c6c6c4"/><circle cx="982.4" cy="273.8" r="4.6" fill="#9a9b99" stroke="#c2c2c0" stroke-width="0.8"/>
<circle cx="979.8" cy="304.4" r="6.4" fill="none" stroke="#c2c2c0" stroke-width="1.2" stroke-dasharray="1 1.2"/><circle cx="979.8" cy="304.4" r="4.2" fill="#cfcfcd"/>
<rect x="975.8" y="320.6" width="10.6" height="10.2" fill="none" stroke="#c2c2c0" stroke-width="1"/><circle cx="977.2" cy="329.4" r="3" fill="#525351" stroke="#c6c6c4" stroke-width="1.3"/><path d="M980 326.600l3.4-3.4" stroke="#9a9b99" stroke-width="1"/>
<path d="M979.6 352H974.600v11h11v-5" fill="none" stroke="#cfcfcd" stroke-width="1.3"/><path d="M979.4 358.200l6.4-6.400M981.4 351.400h4.800v4.8" fill="none" stroke="#cfcfcd" stroke-width="1.3"/>
<path d="M980 374l6.6 3.600l-6.6 3.600l-6.6-3.600Z" fill="#cfcfcd"/><path d="M973.4 381.200l6.6 3.600l6.6-3.6" fill="none" stroke="#cfcfcd" stroke-width="1.4"/>
<rect x="973.4" y="396" width="8.4" height="8" fill="none" stroke="#cfcfcd" stroke-width="1.2"/><rect x="977.6" y="399.8" width="8.8" height="8.2" fill="#525351" stroke="#cfcfcd" stroke-width="1.2"/>
<rect x="951.6" y="298.8" width="10.6" height="19.0" fill="#5e5f5d" rx="3.0" />
<path d="M954.7 82.0L957.2 79.2L959.7 82.0" fill="none" stroke="#8e8f8d" stroke-width="1.2" stroke-linecap="round" stroke-linejoin="round"/>
<path d="M954.7 532.8L957.2 535.6L959.7 532.8" fill="none" stroke="#a4a5a3" stroke-width="1.2" stroke-linecap="round" stroke-linejoin="round"/>
<rect x="391.0" y="541.5" width="560.0" height="11.8" fill="#484a47" rx="0.0" />
<rect x="662.5" y="543.0" width="20.0" height="9.6" fill="#5e5f5d" rx="3.5" />
<path d="M397.4 544.800l-2.2 2.400l2.2 2.4" fill="none" stroke="#8e8f8d" stroke-width="1"/>
<path d="M942.4 544.800l2.2 2.400l-2.2 2.4" fill="none" stroke="#a4a5a3" stroke-width="1.1"/>
<path d="M381.4 544l4 3.200l-4 3.200Z" fill="#d0d0ce"/>
<path d="M101.5 546.7L104.2 549.7L106.9 546.7" fill="none" stroke="#dcdcda" stroke-width="1.3" stroke-linecap="round" stroke-linejoin="round"/>
<path d="M178.7 546.7L181.4 549.7L184.1 546.7" fill="none" stroke="#dcdcda" stroke-width="1.3" stroke-linecap="round" stroke-linejoin="round"/>
<g fill="#6a6b69"><path d="M124 545.400l-3 2.600l3 2.600ZM119.4 545.400h1v5.200h-1ZM136.4 545.400l-3 2.600l3 2.600ZM196.6 545.400l3 2.600l-3 2.600ZM209 545.400l3 2.600l-3 2.600ZM212.6 545.400h1v5.200h-1Z"/></g>
<g stroke="#a2a4a0" stroke-opacity="0.85" fill="none" stroke-width="3.2" stroke-linecap="round" stroke-linejoin="round">
<path d="M761 28.600c4.600 .2 7.600 3 7.600 8V56c0 5.400 3.400 9 9.400 9.200"/>
<rect x="777" y="27.600" width="50.800" height="37.600" rx="8.500"/>
<path d="M785.200 26.400l3-4.600l3 4.600M814.800 26.400l3-4.600l3 4.600" stroke-width="2.600"/>
<path d="M792 33h22.200M792 38.200h22.200M803.200 28.500v9.500M778 49.600h4.800M778 55h4.800M822 49.600h4.800M822 55h4.800"/>
</g>
<path d="M798.800 46l9.800 5.400l-9.800 5.400Z" fill="#a2a4a0" fill-opacity="0.85"/>
</svg>
<div class="t wm" style="left:832.5px;top:17.2px;font-size:43px;line-height:50px;height:50px;font-weight:400;color:#a2a4a0;opacity:.85;transform-origin:0 50%;transform:scale(1.000,1.1);filter:none;font-family:'Noto Sans CJK SC',sans-serif">虎</div>
<div class="t wm" style="left:878.0px;top:17.2px;font-size:43px;line-height:50px;height:50px;font-weight:400;color:#a2a4a0;opacity:.85;transform-origin:0 50%;transform:scale(0.970,1.1);filter:none;font-family:'Noto Sans CJK SC',sans-serif">课</div>
<div class="t wm" style="left:922.8px;top:17.2px;font-size:43px;line-height:50px;height:50px;font-weight:400;color:#a2a4a0;opacity:.85;transform-origin:0 50%;transform:scale(1.200,1.1);filter:none;font-family:'Noto Sans CJK SC',sans-serif">网</div>
<div class="t" style="left:452px;top:6px;font-size:8.5px;line-height:10px;height:10px;color:#828381;font-weight:bold">Br</div>
<div class="t" style="left:479.500px;top:6px;font-size:8.5px;line-height:10px;height:10px;color:#3c3d3b;font-weight:bold">St</div>
</body></html>
